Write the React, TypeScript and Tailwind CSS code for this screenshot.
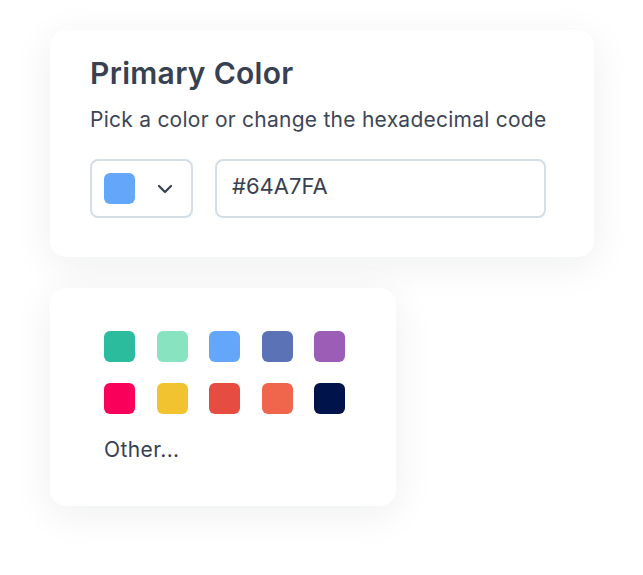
const swatches = [
  '#2bbc9e',
  '#88e3c1',
  '#64a7fa',
  '#5b72b7',
  '#9b5db5',
  '#f9005a',
  '#f1c331',
  '#e74c41',
  '#ef664d',
  '#00134a',
]

export default function App() {
  return (
    <div
      className="flex h-[575px] w-[643px] flex-col bg-white pl-[50px] pt-[30px] text-[#374151]"
      style={{ fontFamily: 'Inter, "Noto Sans", sans-serif' }}
    >
      <section className="flex h-[227px] w-[544px] flex-col rounded-2xl bg-white px-10 pt-[25px] shadow-[0_8px_40px_rgba(15,23,42,0.07)]">
        <h1 className="text-[30px] font-semibold leading-[36px] tracking-[0.3px] text-[#374151]">
          Primary Color
        </h1>
        <p className="mt-[15px] text-[21px] leading-[28px] tracking-[0.25px] text-[#3c4656]">
          Pick a color or change the hexadecimal code
        </p>
        <div className="mt-[25px] flex gap-[22px]">
          <button className="flex h-[59px] w-[103px] items-center rounded-lg border-2 border-[#d3dee7] pl-[12px]">
            <span className="size-[31px] rounded-md bg-[#64a7fa]" />
            <svg
              aria-hidden="true"
              className="ml-[22px] h-[10px] w-[16px]"
              fill="none"
              stroke="#374151"
              strokeLinecap="round"
              strokeLinejoin="round"
              strokeWidth="2.2"
              viewBox="0 0 16 10"
            >
              <path d="M2 2l6 6 6-6" />
            </svg>
          </button>
          <div className="flex h-[59px] w-[331px] items-center rounded-lg border-2 border-[#d3dee7] pb-1 pl-[15px] text-[22px]">
            #64A7FA
          </div>
        </div>
      </section>

      <section className="mt-[31px] flex h-[218px] w-[346px] flex-col rounded-2xl bg-white pl-[54px] pt-[43px] shadow-[0_8px_40px_rgba(15,23,42,0.07)]">
        <div className="grid w-[241px] grid-cols-5 gap-x-[21.5px] gap-y-[21px]">
          {swatches.map((c) => (
            <span
              className="size-[31px] rounded-md"
              key={c}
              style={{ backgroundColor: c }}
            />
          ))}
        </div>
        <p className="mt-[22px] text-[21px] leading-[28px] tracking-[0.4px] text-[#374151]">
          Other...
        </p>
      </section>
    </div>
  )
}
